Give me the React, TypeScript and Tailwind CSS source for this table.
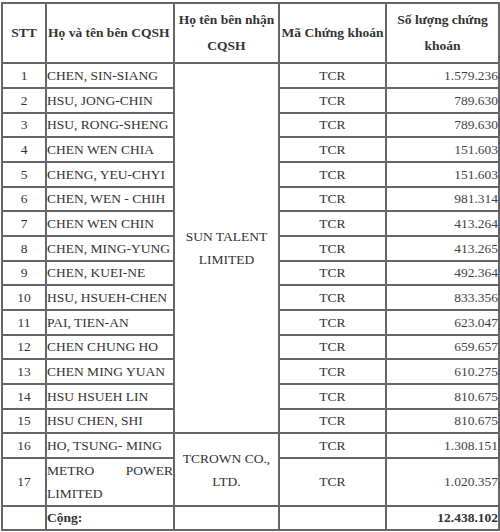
const rows = [
  { stt: 1, name: 'CHEN, SIN-SIANG', qty: '1.579.236' },
  { stt: 2, name: 'HSU, JONG-CHIN', qty: '789.630' },
  { stt: 3, name: 'HSU, RONG-SHENG', qty: '789.630' },
  { stt: 4, name: 'CHEN WEN CHIA', qty: '151.603' },
  { stt: 5, name: 'CHENG, YEU-CHYI', qty: '151.603' },
  { stt: 6, name: 'CHEN, WEN - CHIH', qty: '981.314' },
  { stt: 7, name: 'CHEN WEN CHIN', qty: '413.264' },
  { stt: 8, name: 'CHEN, MING-YUNG', qty: '413.265' },
  { stt: 9, name: 'CHEN, KUEI-NE', qty: '492.364' },
  { stt: 10, name: 'HSU, HSUEH-CHEN', qty: '833.356' },
  { stt: 11, name: 'PAI, TIEN-AN', qty: '623.047' },
  { stt: 12, name: 'CHEN CHUNG HO', qty: '659.657' },
  { stt: 13, name: 'CHEN MING YUAN', qty: '610.275' },
  { stt: 14, name: 'HSU HSUEH LIN', qty: '810.675' },
  { stt: 15, name: 'HSU CHEN, SHI', qty: '810.675' },
]

const cell = 'border-2 border-[#666] p-0 align-middle'

export default function App() {
  return (
    <div className="w-[500px] h-[532px] bg-white pt-[2px] pl-[1px] font-['Liberation_Serif','Times_New_Roman',serif] text-[13.5px] leading-[22px] text-[#333]">
      <table className="border-collapse table-fixed w-[497px]">
        <colgroup>
          <col className="w-[44px]" />
          <col className="w-[128px]" />
          <col className="w-[105px]" />
          <col className="w-[107px]" />
          <col className="w-[113px]" />
        </colgroup>
        <thead>
          <tr className="h-[60px] font-bold leading-[26px]">
            <th className={`${cell} text-center`}>STT</th>
            <th className={`${cell} text-left pl-px`}>Họ và tên bên CQSH</th>
            <th className={`${cell} text-center`}>
              Họ tên bên nhận
              <br />
              CQSH
            </th>
            <th className={`${cell} text-center whitespace-nowrap`}>Mã Chứng khoán</th>
            <th className={`${cell} text-center`}>
              Số lượng chứng
              <br />
              khoán
            </th>
          </tr>
        </thead>
        <tbody>
          {rows.map((r, i) => (
            <tr key={r.stt} className={i % 3 === 2 ? 'h-[24px]' : 'h-[25px]'}>
              <td className={`${cell} text-center`}>{r.stt}</td>
              <td className={`${cell} text-left whitespace-nowrap`}>{r.name}</td>
              {i === 0 && (
                <td rowSpan={15} className={`${cell} text-center leading-[23px]`}>
                  SUN TALENT
                  <br />
                  LIMITED
                </td>
              )}
              <td className={`${cell} text-center`}>TCR</td>
              <td className={`${cell} text-right text-[#444]`}>{r.qty}</td>
            </tr>
          ))}
          <tr className="h-[25px]">
            <td className={`${cell} text-center`}>16</td>
            <td className={`${cell} text-left whitespace-nowrap`}>HO, TSUNG- MING</td>
            <td rowSpan={2} className={`${cell} text-center leading-[23px]`}>
              TCROWN CO.,
              <br />
              LTD.
            </td>
            <td className={`${cell} text-center`}>TCR</td>
            <td className={`${cell} text-right text-[#444]`}>1.308.151</td>
          </tr>
          <tr className="h-[46px]">
            <td className={`${cell} text-center`}>17</td>
            <td className={`${cell} text-justify [text-align-last:left] leading-[23px]`}>METRO POWER LIMITED</td>
            <td className={`${cell} text-center`}>TCR</td>
            <td className={`${cell} text-right text-[#444]`}>1.020.357</td>
          </tr>
          <tr className="h-[24px] font-bold">
            <td className={cell}></td>
            <td className={`${cell} text-left`}>Cộng:</td>
            <td className={cell}></td>
            <td className={cell}></td>
            <td className={`${cell} text-right`}>12.438.102</td>
          </tr>
        </tbody>
      </table>
    </div>
  )
}
